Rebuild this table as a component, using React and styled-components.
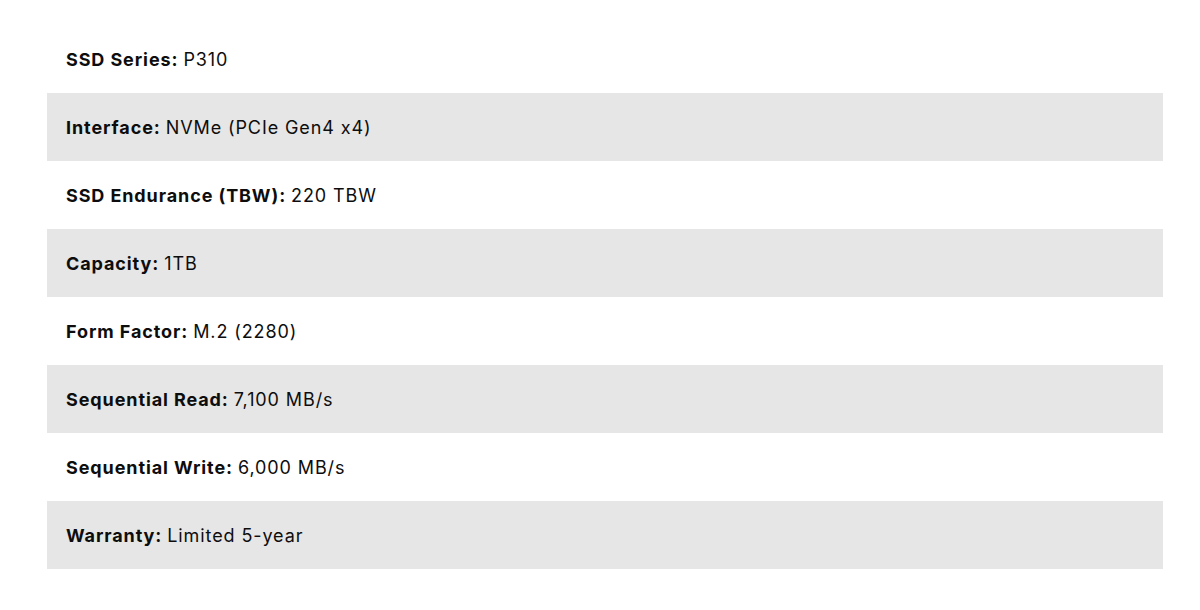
import React from "react";
import styled, { createGlobalStyle } from "styled-components";

const specs = [
  ["SSD Series", "P310"],
  ["Interface", "NVMe (PCIe Gen4 x4)"],
  ["SSD Endurance (TBW)", "220 TBW"],
  ["Capacity", "1TB"],
  ["Form Factor", "M.2 (2280)"],
  ["Sequential Read", "7,100 MB/s"],
  ["Sequential Write", "6,000 MB/s"],
  ["Warranty", "Limited 5-year"],
];

const GlobalStyle = createGlobalStyle`
  body {
    margin: 0;
    background: #ffffff;
    font-family: "Inter", "Liberation Sans", sans-serif;
    font-feature-settings: "calt" 0;
    color: #0d0d0d;
  }
`;

const Wrap = styled.div`
  padding: 25px 37px 0px 47px;
`;

const SpecList = styled.ul`
  list-style: none;
  margin: 0;
  padding: 0;
`;

const SpecRow = styled.li`
  height: 68px;
  display: flex;
  align-items: center;
  padding: 0px 19px;
  font-size: 18px;
  letter-spacing: 0.9px;
  background: ${(p) => (p.$shaded ? "#e6e6e6" : "transparent")};
`;

const Label = styled.strong`
  font-weight: 700;
  margin-right: 5px;
`;

const App = () => {
  return (
    <>
      <GlobalStyle />
      <Wrap>
        <SpecList>
          {specs.map(([k, v], i) => (
            <SpecRow key={k} $shaded={i % 2 === 1}>
              <Label>{k}:</Label>
              {v}
            </SpecRow>
          ))}
        </SpecList>
      </Wrap>
    </>
  );
};

export default App;
